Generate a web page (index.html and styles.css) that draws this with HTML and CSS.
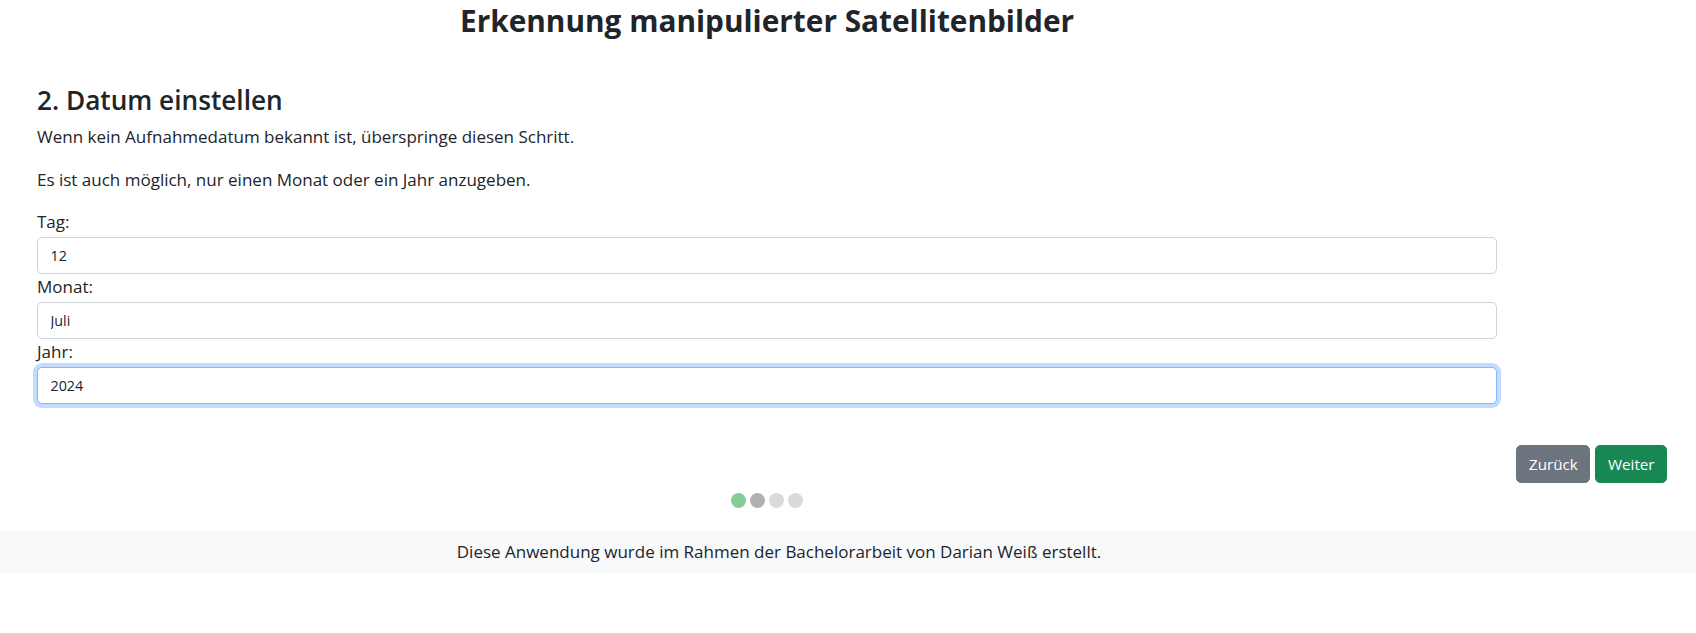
FILE: index.html
```html
<!DOCTYPE html>
<html lang="de">
<head>
<meta charset="utf-8">
<title>Erkennung manipulierter Satellitenbilder</title>
<link rel="stylesheet" href="styles.css">
</head>
<body>
<header class="app-header">
  <h1 class="app-title">Erkennung manipulierter Satellitenbilder</h1>
</header>
<main class="step">
  <h2 class="step-title">2. Datum einstellen</h2>
  <p class="step-text">Wenn kein Aufnahmedatum bekannt ist, überspringe diesen Schritt.</p>
  <p class="step-text last">Es ist auch möglich, nur einen Monat oder ein Jahr anzugeben.</p>
  <form class="date-form">
    <label class="field-label" for="tag">Tag:</label>
    <input class="field-input" id="tag" type="text" value="12">
    <label class="field-label" for="monat">Monat:</label>
    <input class="field-input" id="monat" type="text" value="Juli">
    <label class="field-label" for="jahr">Jahr:</label>
    <input class="field-input is-focused" id="jahr" type="text" value="2024">
  </form>
  <div class="step-actions">
    <button class="btn btn-back" type="button">Zurück</button>
    <button class="btn btn-next" type="button">Weiter</button>
  </div>
</main>
<div class="progress-dots">
  <span class="dot dot-done"></span>
  <span class="dot dot-current"></span>
  <span class="dot"></span>
  <span class="dot"></span>
</div>
<footer class="app-footer">
  <p class="footer-text">Diese Anwendung wurde im Rahmen der Bachelorarbeit von Darian Weiß erstellt.</p>
</footer>
</body>
</html>
```

FILE: styles.css
```css
* { box-sizing: border-box; }

body {
  margin: 0;
  font-family: "Open Sans", "Noto Sans", sans-serif;
  font-size: 17px;
  color: #212529;
  background: #fff;
}

.app-header {
  width: 1534px;
  text-align: center;
}

.app-title {
  margin: 0;
  font-size: 29.8px;
  font-weight: 700;
  line-height: 41px;
}

.step {
  padding: 41px 29px 0 37px;
}

.step-title {
  margin: 0 0 6px;
  font-size: 26.2px;
  font-weight: 600;
  line-height: 36px;
}

.step-text {
  margin: 0 0 17px;
  line-height: 26px;
}

.step-text.last {
  margin-bottom: 16px;
}

.date-form {
  display: flex;
  flex-direction: column;
  width: 1460px;
}

.field-label {
  display: block;
  line-height: 26px;
  margin-bottom: 1.5px;
}

.field-input {
  display: block;
  width: 100%;
  height: 37px;
  margin: 0 0 0.5px;
  padding: 0 12.5px;
  font-family: inherit;
  font-size: 14.3px;
  color: #212529;
  background: #fff;
  border: 1px solid #ced4da;
  border-radius: 5px;
  outline: none;
}

.field-input.is-focused {
  border-color: #86b7fe;
  box-shadow: 0 0 0 4px rgba(13, 110, 253, 0.25);
}

.step-actions {
  display: flex;
  justify-content: flex-end;
  gap: 5px;
  margin-top: 40.7px;
}

.btn {
  height: 38px;
  padding: 0 12px;
  font-family: inherit;
  font-size: 15.2px;
  color: #fff;
  border: 1px solid transparent;
  border-radius: 5px;
}

.btn-back {
  width: 74px;
  background: #6c757d;
  border-color: #6c757d;
}

.btn-next {
  width: 72px;
  background: #198754;
  border-color: #198754;
}

.progress-dots {
  width: 1534px;
  display: flex;
  justify-content: center;
  gap: 4px;
  margin-top: 10px;
}

.dot {
  width: 15px;
  height: 15px;
  border-radius: 50%;
  background: #dadada;
}

.dot-done { background: #86cd95; }
.dot-current { background: #b0b0b0; }

.app-footer {
  margin-top: 23px;
  height: 42px;
  background: #f8f9fa;
  display: flex;
  align-items: center;
}

.footer-text {
  margin: 0;
  width: 1558px;
  text-align: center;
  line-height: 26px;
}
```
